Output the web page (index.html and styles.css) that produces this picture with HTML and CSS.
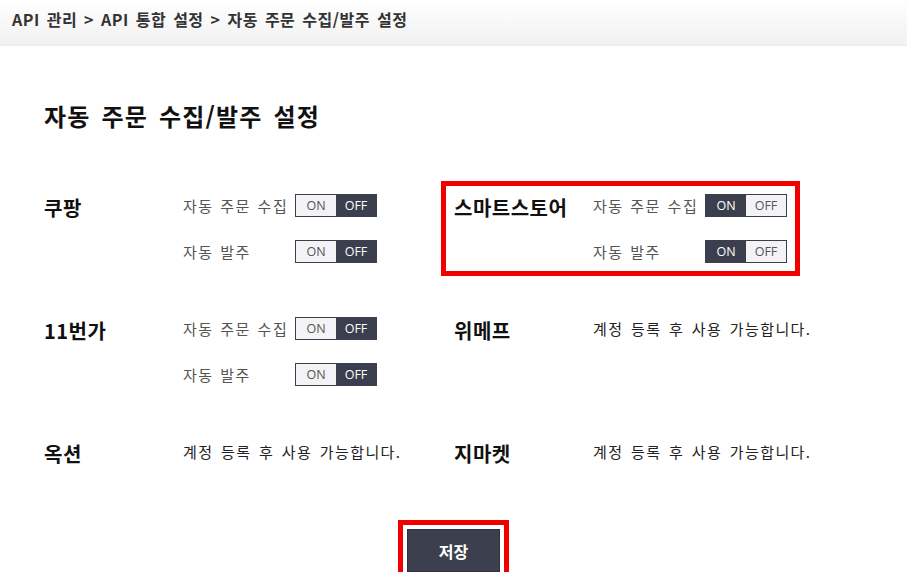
FILE: index.html
```html
<!DOCTYPE html>
<html lang="ko">
<head>
<meta charset="utf-8">
<title>자동 주문 수집/발주 설정</title>
<link rel="stylesheet" href="styles.css">
</head>
<body>
<header class="crumbs">API 관리 &gt; API 통합 설정 &gt; 자동 주문 수집/발주 설정</header>
<main class="page">
  <h1 class="title">자동 주문 수집/발주 설정</h1>
  <section class="markets">
    <div class="market">
      <div class="name">쿠팡</div>
      <div class="controls">
        <div class="ctrl"><span class="label">자동 주문 수집</span><span class="toggle"><span class="seg">ON</span><span class="seg on">OFF</span></span></div>
        <div class="ctrl"><span class="label">자동 발주</span><span class="toggle"><span class="seg">ON</span><span class="seg on">OFF</span></span></div>
      </div>
    </div>
    <div class="market highlight">
      <div class="name">스마트스토어</div>
      <div class="controls">
        <div class="ctrl"><span class="label">자동 주문 수집</span><span class="toggle"><span class="seg on">ON</span><span class="seg">OFF</span></span></div>
        <div class="ctrl"><span class="label">자동 발주</span><span class="toggle"><span class="seg on">ON</span><span class="seg">OFF</span></span></div>
      </div>
    </div>
    <div class="market">
      <div class="name">11번가</div>
      <div class="controls">
        <div class="ctrl"><span class="label">자동 주문 수집</span><span class="toggle"><span class="seg">ON</span><span class="seg on">OFF</span></span></div>
        <div class="ctrl"><span class="label">자동 발주</span><span class="toggle"><span class="seg">ON</span><span class="seg on">OFF</span></span></div>
      </div>
    </div>
    <div class="market">
      <div class="name">위메프</div>
      <div class="controls">
        <div class="ctrl"><span class="note">계정 등록 후 사용 가능합니다.</span></div>
      </div>
    </div>
    <div class="market">
      <div class="name">옥션</div>
      <div class="controls">
        <div class="ctrl"><span class="note">계정 등록 후 사용 가능합니다.</span></div>
      </div>
    </div>
    <div class="market">
      <div class="name">지마켓</div>
      <div class="controls">
        <div class="ctrl"><span class="note">계정 등록 후 사용 가능합니다.</span></div>
      </div>
    </div>
  </section>
  <div class="actions"><button class="save" type="button">저장</button></div>
</main>
</body>
</html>
```

FILE: styles.css
```css
* { box-sizing: border-box; }
html, body { margin: 0; padding: 0; background: #fff; }
body {
  font-family: "Noto Sans CJK KR", "Noto Sans", sans-serif;
  color: #222;
}
.crumbs {
  height: 46px;
  padding: 8px 12px 0;
  font-size: 16px;
  line-height: 22px;
  font-weight: 700;
  color: #333;
  letter-spacing: 0.5px;
  word-spacing: 2px;
  background: linear-gradient(#ffffff, #f1f1f1);
  border-bottom: 1px solid #ececec;
}
.page { padding: 0 0 0 44px; }
.title {
  margin: 55px 0 0;
  font-size: 24px;
  line-height: 30px;
  font-weight: 700;
  color: #111;
  letter-spacing: 1.2px;
  word-spacing: 3px;
}
.markets {
  margin-top: 63px;
  display: grid;
  grid-template-columns: 410px 410px;
  row-gap: 54px;
}
.market { display: flex; align-items: flex-start; }
.market.highlight {
  width: 333px;
  outline: 5px solid #f20000;
  outline-offset: 8px;
}
.name {
  width: 139px;
  flex: none;
  padding-top: 2px;
  font-size: 20px;
  line-height: 23px;
  font-weight: 700;
  color: #111;
  letter-spacing: 0.5px;
}
.controls { display: flex; flex-direction: column; gap: 23px; }
.ctrl { display: flex; align-items: center; height: 23px; }
.label {
  width: 112px;
  flex: none;
  font-size: 15px;
  line-height: 23px;
  color: #555;
  letter-spacing: 1.5px;
  word-spacing: 1px;
}
.note {
  font-size: 15px;
  line-height: 23px;
  color: #222;
  letter-spacing: 1.4px;
  word-spacing: 2px;
}
.toggle {
  display: flex;
  width: 82px;
  height: 23px;
  border: 1px solid #3b3e4c;
}
.seg {
  flex: 1;
  display: flex;
  align-items: center;
  justify-content: center;
  font-family: "Open Sans", "Noto Sans", sans-serif;
  font-size: 12.5px;
  color: #555;
  background: #f3f3f6;
}
.seg.on { background: #3b3e4c; color: #fff; }
.actions {
  display: flex;
  justify-content: center;
  margin: 64px 0 0 -44px;
}
.save {
  width: 93px;
  height: 43px;
  border: 1px solid #2f323e;
  background: #3c3f4d;
  color: #fff;
  font-family: "Noto Sans CJK KR", sans-serif;
  font-size: 16px;
  font-weight: 700;
  outline: 5px solid #f20000;
  outline-offset: 4px;
}
```
